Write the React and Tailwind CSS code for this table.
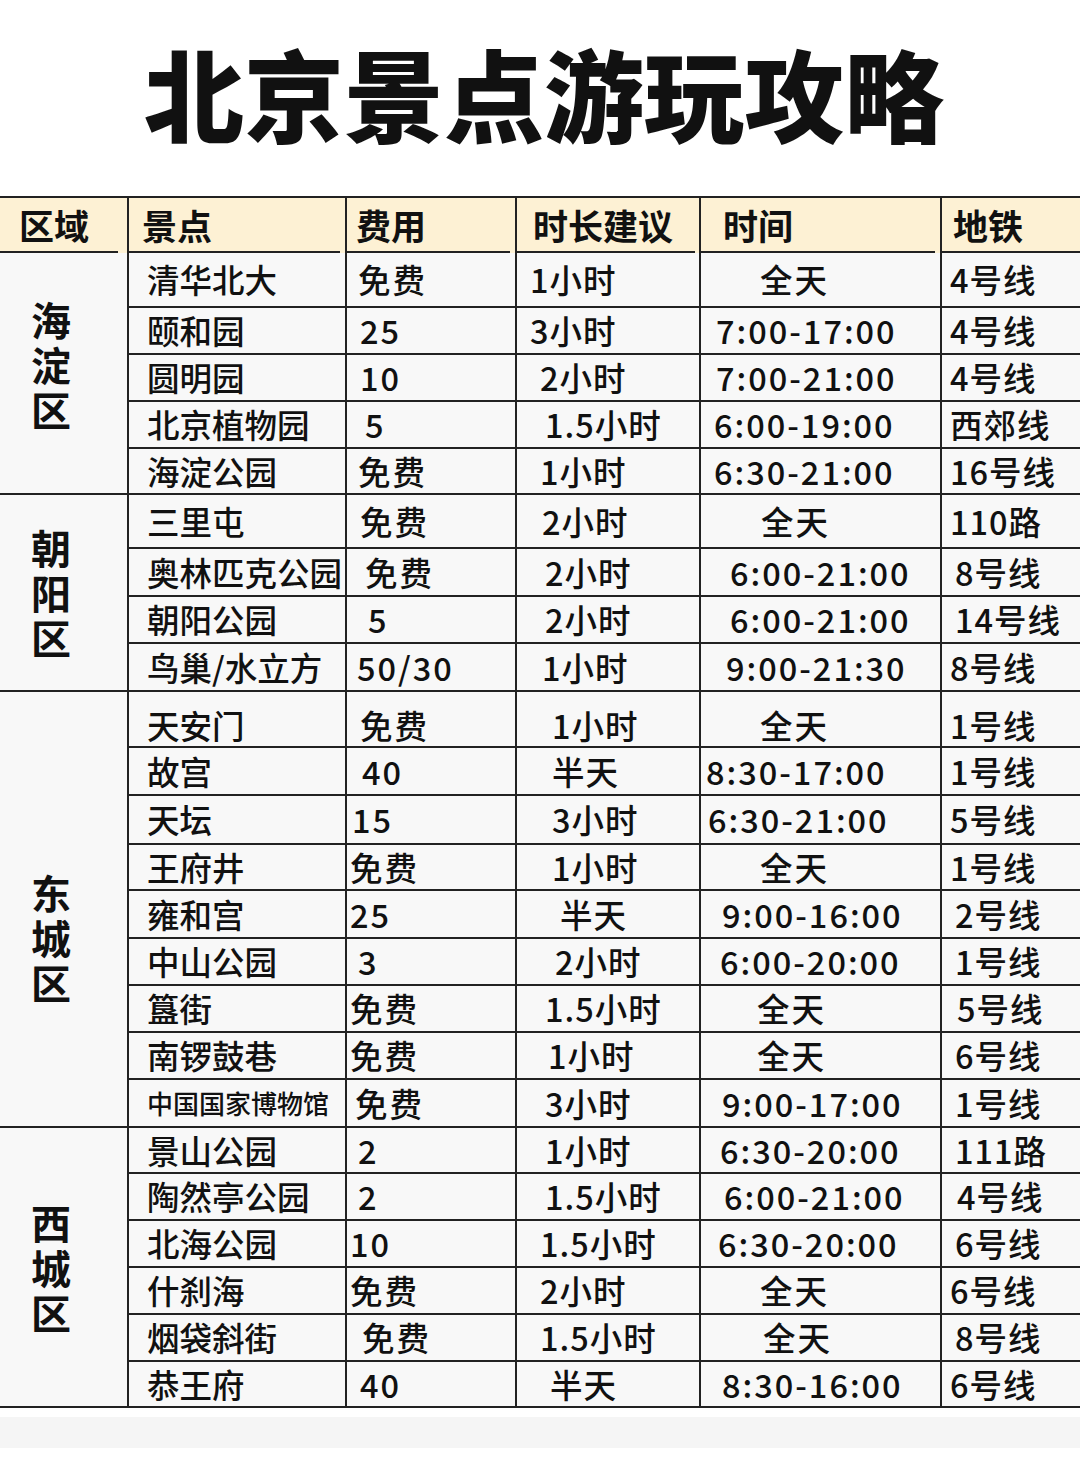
const groups = [
  {
    name: ["海", "淀", "区"],
    nameCls: "pb-[18px]",
    rows: [
      ["h-[55px]", "清华北大", "免费", "pl-[11px]", "1小时", "pl-[13px]", "全天", "pl-[59px]", "4号线", "pl-[8px]"],
      ["h-[47px]", "颐和园", "25", "pl-[13px]", "3小时", "pl-[13px]", "7:00-17:00", "pl-[15px]", "4号线", "pl-[8px]"],
      ["h-[47px]", "圆明园", "10", "pl-[13px]", "2小时", "pl-[23px]", "7:00-21:00", "pl-[15px]", "4号线", "pl-[8px]"],
      ["h-[47px]", "北京植物园", "5", "pl-[18px]", "1.5小时", "pl-[28px]", "6:00-19:00", "pl-[13px]", "西郊线", "pl-[8px]"],
      ["h-[44px]", "海淀公园", "免费", "pl-[11px]", "1小时", "pl-[23px]", "6:30-21:00", "pl-[13px]", "16号线", "pl-[8px]"],
    ],
  },
  {
    name: ["朝", "阳", "区"],
    nameCls: "",
    rows: [
      ["h-[54px]", "三里屯", "免费", "pl-[13px]", "2小时", "pl-[25px]", "全天", "pl-[60px]", "110路", "pl-[8px]"],
      ["h-[48px]", "奥林匹克公园", "免费", "pl-[18px]", "2小时", "pl-[28px]", "6:00-21:00", "pl-[29px]", "8号线", "pl-[13px]"],
      ["h-[47px]", "朝阳公园", "5", "pl-[21px]", "2小时", "pl-[28px]", "6:00-21:00", "pl-[29px]", "14号线", "pl-[13px]"],
      ["h-[46px]", "鸟巢/水立方", "50/30", "pl-[10px]", "1小时", "pl-[25px]", "9:00-21:30", "pl-[25px]", "8号线", "pl-[8px]"],
    ],
  },
  {
    name: ["东", "城", "区"],
    nameCls: "pt-[56px]",
    rows: [
      ["h-[56px]", "天安门", "免费", "pl-[13px]", "1小时", "pl-[35px]", "全天", "pl-[59px]", "1号线", "pl-[8px]", "pt-[12px]"],
      ["h-[48px]", "故宫", "40", "pl-[15px]", "半天", "pl-[35px]", "8:30-17:00", "pl-[5px]", "1号线", "pl-[8px]"],
      ["h-[49px]", "天坛", "15", "pl-[5px]", "3小时", "pl-[35px]", "6:30-21:00", "pl-[7px]", "5号线", "pl-[8px]"],
      ["h-[46px]", "王府井", "免费", "pl-[3px]", "1小时", "pl-[35px]", "全天", "pl-[59px]", "1号线", "pl-[8px]"],
      ["h-[48px]", "雍和宫", "25", "pl-[3px]", "半天", "pl-[43px]", "9:00-16:00", "pl-[21px]", "2号线", "pl-[13px]"],
      ["h-[47px]", "中山公园", "3", "pl-[11px]", "2小时", "pl-[38px]", "6:00-20:00", "pl-[19px]", "1号线", "pl-[13px]"],
      ["h-[47px]", "簋街", "免费", "pl-[3px]", "1.5小时", "pl-[28px]", "全天", "pl-[56px]", "5号线", "pl-[15px]"],
      ["h-[47px]", "南锣鼓巷", "免费", "pl-[3px]", "1小时", "pl-[31px]", "全天", "pl-[56px]", "6号线", "pl-[13px]"],
      ["h-[46px]", "中国国家博物馆", "免费", "pl-[8px]", "3小时", "pl-[28px]", "9:00-17:00", "pl-[21px]", "1号线", "pl-[13px]"],
    ],
  },
  {
    name: ["西", "城", "区"],
    nameCls: "",
    rows: [
      ["h-[46px]", "景山公园", "2", "pl-[11px]", "1小时", "pl-[28px]", "6:30-20:00", "pl-[19px]", "111路", "pl-[13px]"],
      ["h-[47px]", "陶然亭公园", "2", "pl-[11px]", "1.5小时", "pl-[28px]", "6:00-21:00", "pl-[23px]", "4号线", "pl-[15px]"],
      ["h-[47px]", "北海公园", "10", "pl-[3px]", "1.5小时", "pl-[23px]", "6:30-20:00", "pl-[17px]", "6号线", "pl-[13px]"],
      ["h-[47px]", "什刹海", "免费", "pl-[3px]", "2小时", "pl-[23px]", "全天", "pl-[59px]", "6号线", "pl-[8px]"],
      ["h-[47px]", "烟袋斜街", "免费", "pl-[15px]", "1.5小时", "pl-[23px]", "全天", "pl-[62px]", "8号线", "pl-[13px]"],
      ["h-[44px]", "恭王府", "40", "pl-[13px]", "半天", "pl-[33px]", "8:30-16:00", "pl-[21px]", "6号线", "pl-[8px]"],
    ],
  },
];

const HeadCell = ({ className, pad, gap, children }) => (
  <div className={`flex flex-col bg-[#fdf1d4] ${className}`}>
    <div className={`flex flex-1 items-center ${pad}`}>{children}</div>
    <div className={`h-[2px] bg-[#222] ${gap}`} />
  </div>
);

const Row = ({ r, last }) => {
  const [h, spot, fee, feePl, dur, durPl, time, timePl, metro, metroPl, pt = ""] = r;
  const small = spot.length > 6;
  return (
    <div className={`flex ${h} ${last ? "" : "border-b-2 border-[#222]"}`}>
      <div
        className={`flex w-[216px] items-center pl-[18px] ${pt} ${
          small ? "text-[26px]" : ""
        }`}
      >
        {spot}
      </div>
      <div className={`flex w-[170px] items-center border-l-2 border-[#222] tracking-[2px] ${pt} ${feePl}`}>
        {fee}
      </div>
      <div className={`flex w-[184px] items-center border-l-2 border-[#222] tracking-[1px] ${pt} ${durPl}`}>
        {dur}
      </div>
      <div className={`flex w-[241px] items-center border-l-2 border-[#222] tracking-[2px] ${pt} ${timePl}`}>
        {time}
      </div>
      <div className={`flex flex-1 items-center border-l-2 border-[#222] tracking-[1px] ${pt} ${metroPl}`}>
        {metro}
      </div>
    </div>
  );
};

export default function App() {
  return (
    <div className="w-[1080px] h-[1461px] overflow-hidden bg-white text-[#111] font-['Noto_Sans_CJK_SC',sans-serif]">
      {/* Title */}
      <h1 className="h-[196px] pt-[42px] pl-[8px] text-center text-[100px] leading-[100px] font-black">
        北京景点游玩攻略
      </h1>

      {/* Table */}
      <div className="border-t-2 border-[#222] bg-[#f8f8f8]">
        {/* Header */}
        <div className="flex h-[55px] text-[35px] font-bold leading-none">
          <HeadCell className="w-[129px] border-r-2 border-[#222]" pad="pl-[19px]" gap="mr-[9px]">
            区域
          </HeadCell>
          <HeadCell className="w-[216px]" pad="pl-[13px]" gap="mr-[5px]">
            景点
          </HeadCell>
          <HeadCell className="w-[170px] border-l-2 border-[#222]" pad="pl-[9px]" gap="mr-[5px]">
            费用
          </HeadCell>
          <HeadCell className="w-[184px] border-l-2 border-[#222]" pad="pl-[16px]" gap="mr-[4px]">
            时长建议
          </HeadCell>
          <HeadCell className="w-[241px] border-l-2 border-[#222]" pad="pl-[22px]" gap="mr-[5px]">
            时间
          </HeadCell>
          <HeadCell className="flex-1 border-l-2 border-[#222]" pad="pl-[11px]" gap="">
            地铁
          </HeadCell>
        </div>

        {/* Body */}
        {groups.map((g) => (
          <div key={g.name.join("")} className="flex border-b-2 border-[#222]">
            <div
              className={`flex w-[129px] flex-col justify-center border-r-2 border-[#222] pl-[31px] text-[40px] font-bold leading-[45px] ${g.nameCls}`}
            >
              {g.name.map((c) => (
                <div key={c} className="h-[45px]">
                  {c}
                </div>
              ))}
            </div>
            <div className="flex flex-1 flex-col text-[32.5px] font-medium leading-none whitespace-nowrap">
              {g.rows.map((r, i) => (
                <Row key={r[1]} r={r} last={i === g.rows.length - 1} />
              ))}
            </div>
          </div>
        ))}
      </div>

      {/* Bottom band */}
      <div className="mt-[9px] h-[31px] bg-[#f5f5f5]" />
    </div>
  );
}
